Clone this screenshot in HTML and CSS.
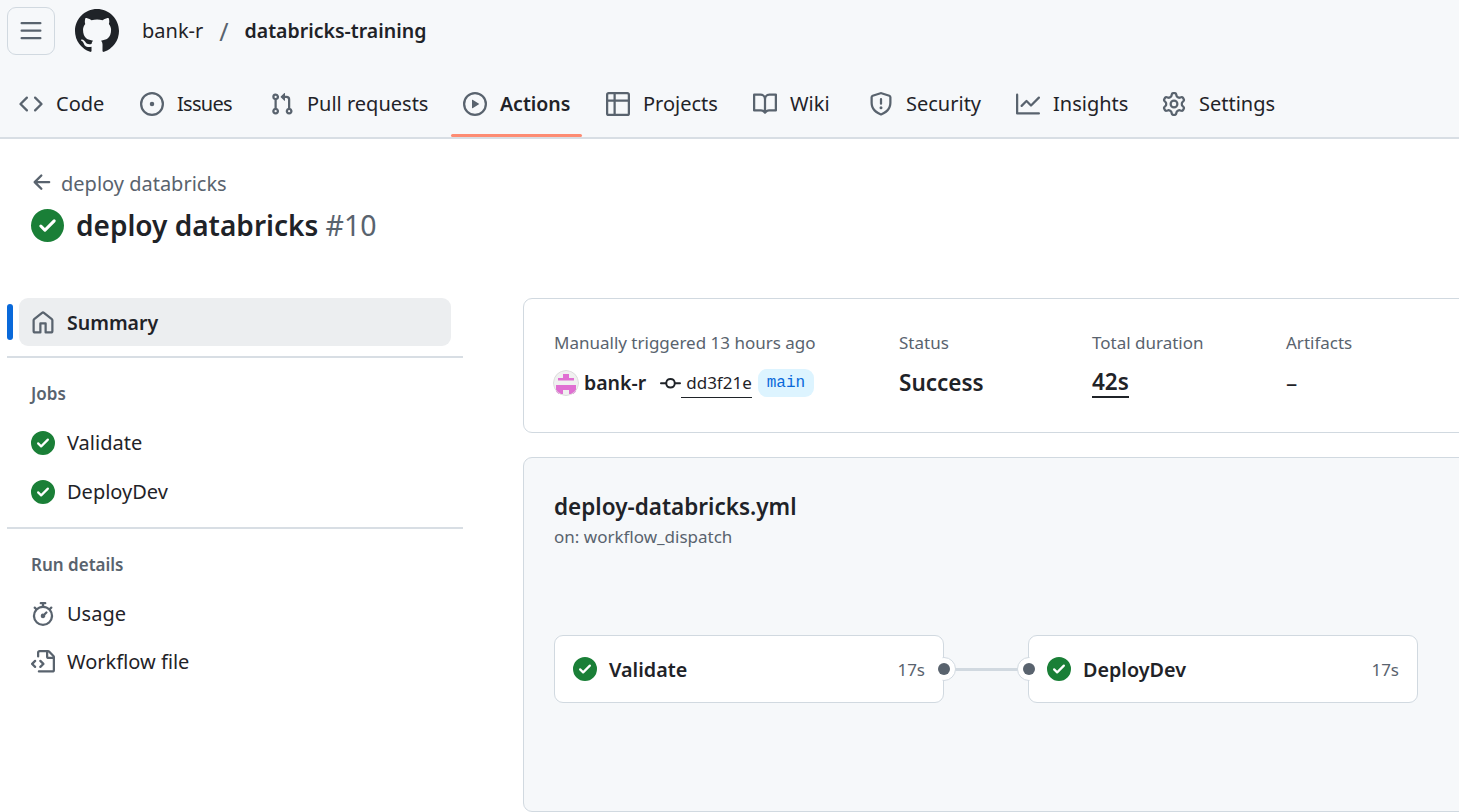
FILE: index.html
```html
<!DOCTYPE html>
<html lang="en">
<head>
<meta charset="utf-8">
<title>deploy databricks #10</title>
<link rel="stylesheet" href="styles.css">
</head>
<body>
<header class="header">
  <div class="topbar">
    <button class="menu-btn" aria-label="Menu"><svg class="ic" viewBox="0 0 16 16"><path d="M1 2.75A.75.75 0 0 1 1.75 2h12.5a.75.75 0 0 1 0 1.5H1.75A.75.75 0 0 1 1 2.75Zm0 5A.75.75 0 0 1 1.75 7h12.5a.75.75 0 0 1 0 1.5H1.75A.75.75 0 0 1 1 7.75ZM1.75 12h12.5a.75.75 0 0 1 0 1.5H1.75a.75.75 0 0 1 0-1.5Z"/></svg></button>
    <svg class="logo" viewBox="0 0 16 16"><path d="M8 0c4.42 0 8 3.58 8 8a8.013 8.013 0 0 1-5.45 7.59c-.4.08-.55-.17-.55-.38 0-.27.01-1.13.01-2.2 0-.75-.25-1.23-.54-1.48 1.78-.2 3.65-.88 3.65-3.95 0-.88-.31-1.59-.82-2.15.08-.2.36-1.02-.08-2.12 0 0-.67-.22-2.2.82-.64-.18-1.32-.27-2-.27-.68 0-1.36.09-2 .27-1.53-1.03-2.2-.82-2.2-.82-.44 1.1-.16 1.92-.08 2.12-.51.56-.82 1.28-.82 2.15 0 3.06 1.86 3.75 3.64 3.95-.23.2-.44.55-.51 1.07-.46.21-1.61.55-2.33-.66-.15-.24-.6-.83-1.23-.82-.67.01-.27.38.01.53.34.19.73.9.82 1.13.16.45.68 1.31 2.69.94 0 .67.01 1.3.01 1.49 0 .21-.15.45-.55.38A7.995 7.995 0 0 1 0 8c0-4.42 3.58-8 8-8Z"/></svg>
    <nav class="crumbs"><span>bank-r</span><span class="slash">/</span><strong class="repo">databricks-training</strong></nav>
  </div>
  <nav class="tabs">
    <a class="tab"><svg class="ic" viewBox="0 0 16 16"><path d="m11.28 3.22 4.25 4.25a.75.75 0 0 1 0 1.06l-4.25 4.25a.749.749 0 0 1-1.275-.326.749.749 0 0 1 .215-.734L13.94 8l-3.72-3.72a.749.749 0 0 1 .326-1.275.749.749 0 0 1 .734.215Zm-6.56 0a.751.751 0 0 1 1.042.018.751.751 0 0 1 .018 1.042L2.06 8l3.72 3.72a.749.749 0 0 1-.326 1.275.749.749 0 0 1-.734-.215L.47 8.53a.75.75 0 0 1 0-1.06Z"/></svg>Code</a>
    <a class="tab tab-tight"><svg class="ic" viewBox="0 0 16 16"><path d="M8 9.5a1.5 1.5 0 1 0 0-3 1.5 1.5 0 0 0 0 3Z"/><path d="M8 0a8 8 0 1 1 0 16A8 8 0 0 1 8 0ZM1.5 8a6.5 6.5 0 1 0 13 0 6.5 6.5 0 0 0-13 0Z"/></svg>Issues</a>
    <a class="tab"><svg class="ic" viewBox="0 0 16 16"><path d="M1.5 3.25a2.25 2.25 0 1 1 3 2.122v5.256a2.251 2.251 0 1 1-1.5 0V5.372A2.25 2.25 0 0 1 1.5 3.25Zm5.677-.177L9.573.677A.25.25 0 0 1 10 .854V2.5h1A2.5 2.5 0 0 1 13.5 5v5.628a2.251 2.251 0 1 1-1.5 0V5a1 1 0 0 0-1-1h-1v1.646a.25.25 0 0 1-.427.177L7.177 3.427a.25.25 0 0 1 0-.354ZM3.75 2.5a.75.75 0 1 0 0 1.5.75.75 0 0 0 0-1.5Zm0 9.5a.75.75 0 1 0 0 1.5.75.75 0 0 0 0-1.5Zm8.25.75a.75.75 0 1 0 1.5 0 .75.75 0 0 0-1.5 0Z"/></svg>Pull requests</a>
    <a class="tab tab-active"><svg class="ic" viewBox="0 0 16 16"><path d="M8 0a8 8 0 1 1 0 16A8 8 0 0 1 8 0ZM1.5 8a6.5 6.5 0 1 0 13 0 6.5 6.5 0 0 0-13 0Zm4.879-2.773 4.264 2.559a.25.25 0 0 1 0 .428l-4.264 2.559A.25.25 0 0 1 6 10.559V5.442a.25.25 0 0 1 .379-.215Z"/></svg>Actions</a>
    <a class="tab"><svg class="ic" viewBox="0 0 16 16"><path d="M0 1.75C0 .784.784 0 1.75 0h12.5C15.216 0 16 .784 16 1.75v12.5A1.75 1.75 0 0 1 14.25 16H1.75A1.75 1.75 0 0 1 0 14.25ZM6.5 6.5v8h7.75a.25.25 0 0 0 .25-.25V6.5Zm8-1.5V1.75a.25.25 0 0 0-.25-.25H6.5V5Zm-13 1.5v7.75c0 .138.112.25.25.25H5v-8ZM5 5V1.5H1.75a.25.25 0 0 0-.25.25V5Z"/></svg>Projects</a>
    <a class="tab"><svg class="ic" viewBox="0 0 16 16"><path d="M0 1.75A.75.75 0 0 1 .75 1h4.253c1.227 0 2.317.59 3 1.501A3.743 3.743 0 0 1 11.006 1h4.245a.75.75 0 0 1 .75.75v10.5a.75.75 0 0 1-.75.75h-4.507a2.25 2.25 0 0 0-1.591.659l-.622.621a.75.75 0 0 1-1.06 0l-.622-.621A2.25 2.25 0 0 0 5.258 13H.75a.75.75 0 0 1-.75-.75Zm7.251 10.324.004-5.073-.002-2.253A2.25 2.25 0 0 0 5.003 2.5H1.5v9h3.757a3.75 3.75 0 0 1 1.994.574ZM8.755 4.75l-.004 7.322a3.752 3.752 0 0 1 1.992-.572H14.5v-9h-3.495a2.25 2.25 0 0 0-2.25 2.25Z"/></svg>Wiki</a>
    <a class="tab"><svg class="ic" viewBox="0 0 16 16"><path d="M7.467.133a1.748 1.748 0 0 1 1.066 0l5.25 1.68A1.75 1.75 0 0 1 15 3.48V7c0 1.566-.32 3.182-1.303 4.682-.983 1.498-2.585 2.813-5.032 3.855a1.697 1.697 0 0 1-1.33 0c-2.447-1.042-4.049-2.357-5.032-3.855C1.32 10.182 1 8.566 1 7V3.48a1.75 1.75 0 0 1 1.217-1.667Zm.61 1.429a.25.25 0 0 0-.153 0l-5.25 1.68a.25.25 0 0 0-.174.238V7c0 1.358.275 2.666 1.057 3.86.784 1.194 2.121 2.34 4.366 3.297a.196.196 0 0 0 .154 0c2.245-.956 3.582-2.104 4.366-3.298C13.225 9.666 13.5 8.36 13.5 7V3.48a.251.251 0 0 0-.174-.237l-5.25-1.68ZM8.75 4.75v3a.75.75 0 0 1-1.5 0v-3a.75.75 0 0 1 1.5 0ZM9 10.5a1 1 0 1 1-2 0 1 1 0 0 1 2 0Z"/></svg>Security</a>
    <a class="tab"><svg class="ic" viewBox="0 0 16 16"><path d="M1.5 1.75V13.5h13.75a.75.75 0 0 1 0 1.5H.75a.75.75 0 0 1-.75-.75V1.75a.75.75 0 0 1 1.5 0Zm14.28 2.53-5.25 5.25a.75.75 0 0 1-1.06 0L7 7.06 4.28 9.78a.751.751 0 0 1-1.042-.018.751.751 0 0 1-.018-1.042l3.25-3.25a.75.75 0 0 1 1.06 0L10 7.94l4.72-4.72a.751.751 0 0 1 1.042.018.751.751 0 0 1 .018 1.042Z"/></svg>Insights</a>
    <a class="tab"><svg class="ic" viewBox="0 0 16 16"><path d="M8 0a8.2 8.2 0 0 1 .701.031C9.444.095 9.99.645 10.16 1.29l.288 1.107c.018.066.079.158.212.224.231.114.454.243.668.386.123.082.233.09.299.071l1.103-.303c.644-.176 1.392.021 1.82.63.27.385.506.792.704 1.218.315.675.111 1.422-.364 1.891l-.814.806c-.049.048-.098.147-.088.294.016.257.016.515 0 .772-.01.147.038.246.088.294l.814.806c.475.469.679 1.216.364 1.891a7.977 7.977 0 0 1-.704 1.217c-.428.61-1.176.807-1.82.63l-1.102-.302c-.067-.019-.177-.011-.3.071a5.909 5.909 0 0 1-.668.386c-.133.066-.194.158-.211.224l-.29 1.106c-.168.646-.715 1.196-1.458 1.26a8.006 8.006 0 0 1-1.402 0c-.743-.064-1.289-.614-1.458-1.26l-.289-1.106c-.018-.066-.079-.158-.212-.224a5.738 5.738 0 0 1-.668-.386c-.123-.082-.233-.09-.299-.071l-1.103.303c-.644.176-1.392-.021-1.82-.63a8.12 8.12 0 0 1-.704-1.218c-.315-.675-.111-1.422.363-1.891l.815-.806c.05-.048.098-.147.088-.294a6.214 6.214 0 0 1 0-.772c.01-.147-.038-.246-.088-.294l-.815-.806C.635 6.045.431 5.298.746 4.623a7.92 7.92 0 0 1 .704-1.217c.428-.61 1.176-.807 1.82-.63l1.102.302c.067.019.177.011.3-.071.214-.143.437-.272.668-.386.133-.066.194-.158.211-.224l.29-1.106C6.009.645 6.556.095 7.299.03 7.53.01 7.764 0 8 0Zm-.571 1.525c-.036.003-.108.036-.137.146l-.289 1.105c-.147.561-.549.967-.998 1.189-.173.086-.34.183-.5.29-.417.278-.97.423-1.529.27l-1.103-.303c-.109-.03-.175.016-.195.045-.22.312-.412.644-.573.99-.014.031-.021.11.059.19l.815.806c.411.406.562.957.53 1.456a4.709 4.709 0 0 0 0 .582c.032.499-.119 1.05-.53 1.456l-.815.806c-.081.08-.073.159-.059.19.162.346.353.677.573.989.02.03.085.076.195.046l1.102-.303c.56-.153 1.113-.008 1.53.27.161.107.328.204.501.29.447.222.85.629.997 1.189l.289 1.105c.029.109.101.143.137.146a6.6 6.6 0 0 0 1.142 0c.036-.003.108-.036.137-.146l.289-1.105c.147-.561.549-.967.998-1.189.173-.086.34-.183.5-.29.417-.278.97-.423 1.529-.27l1.103.303c.109.029.175-.016.195-.045.22-.313.411-.644.573-.99.014-.031.021-.11-.059-.19l-.815-.806c-.411-.406-.562-.957-.53-1.456a4.709 4.709 0 0 0 0-.582c-.032-.499.119-1.05.53-1.456l.815-.806c.081-.08.073-.159.059-.19a6.464 6.464 0 0 0-.573-.989c-.02-.03-.085-.076-.195-.046l-1.102.303c-.56.153-1.113.008-1.53-.27a4.44 4.44 0 0 0-.501-.29c-.447-.222-.85-.629-.997-1.189l-.289-1.105c-.029-.11-.101-.143-.137-.146a6.6 6.6 0 0 0-1.142 0ZM11 8a3 3 0 1 1-6 0 3 3 0 0 1 6 0ZM9.5 8a1.5 1.5 0 1 0-3.001.001A1.5 1.5 0 0 0 9.5 8Z"/></svg>Settings</a>
  </nav>
</header>

<section class="run-head">
  <a class="back"><svg class="ic ic-back" viewBox="0 0 16 16"><path d="M7.78 12.53a.75.75 0 0 1-1.06 0L2.47 8.28a.75.75 0 0 1 0-1.06l4.25-4.25a.751.751 0 0 1 1.042.018.751.751 0 0 1 .018 1.042L4.81 7h7.44a.75.75 0 0 1 0 1.5H4.81l2.97 2.97a.75.75 0 0 1 0 1.06Z"/></svg>deploy databricks</a>
  <h1 class="title"><svg class="ic-check ic-check-lg" viewBox="0 0 16 16"><path d="M8 16A8 8 0 1 1 8 0a8 8 0 0 1 0 16Zm3.78-9.72a.751.751 0 0 0-.018-1.042.751.751 0 0 0-1.042-.018L6.75 9.19 5.28 7.72a.751.751 0 0 0-1.042.018.751.751 0 0 0-.018 1.042l2 2a.75.75 0 0 0 1.06 0Z"/></svg><span>deploy databricks <span class="num">#10</span></span></h1>
</section>

<div class="layout">
  <aside class="sidebar">
    <a class="side-item side-selected"><svg class="ic" viewBox="0 0 16 16"><path d="M6.906.664a1.749 1.749 0 0 1 2.187 0l5.25 4.2c.415.332.657.835.657 1.367v7.019A1.75 1.75 0 0 1 13.25 15h-3.5a.75.75 0 0 1-.75-.75V9H7v5.25a.75.75 0 0 1-.75.75h-3.5A1.75 1.75 0 0 1 1 13.25V6.23c0-.531.242-1.034.657-1.366l5.25-4.2Zm1.25 1.171a.25.25 0 0 0-.312 0l-5.25 4.2a.25.25 0 0 0-.094.196v7.019c0 .138.112.25.25.25H5.5V8.25a.75.75 0 0 1 .75-.75h3.5a.75.75 0 0 1 .75.75v5.25h2.75a.25.25 0 0 0 .25-.25V6.23a.25.25 0 0 0-.094-.195Z"/></svg>Summary</a>
    <div class="side-rule"></div>
    <div class="side-label">Jobs</div>
    <a class="side-item side-job"><svg class="ic-check" viewBox="0 0 16 16"><path d="M8 16A8 8 0 1 1 8 0a8 8 0 0 1 0 16Zm3.78-9.72a.751.751 0 0 0-.018-1.042.751.751 0 0 0-1.042-.018L6.75 9.19 5.28 7.72a.751.751 0 0 0-1.042.018.751.751 0 0 0-.018 1.042l2 2a.75.75 0 0 0 1.06 0Z"/></svg>Validate</a>
    <a class="side-item side-job"><svg class="ic-check" viewBox="0 0 16 16"><path d="M8 16A8 8 0 1 1 8 0a8 8 0 0 1 0 16Zm3.78-9.72a.751.751 0 0 0-.018-1.042.751.751 0 0 0-1.042-.018L6.75 9.19 5.28 7.72a.751.751 0 0 0-1.042.018.751.751 0 0 0-.018 1.042l2 2a.75.75 0 0 0 1.06 0Z"/></svg>DeployDev</a>
    <div class="side-rule"></div>
    <div class="side-label">Run details</div>
    <a class="side-item"><svg class="ic" viewBox="0 0 16 16"><path d="M5.75.75A.75.75 0 0 1 6.5 0h3a.75.75 0 0 1 0 1.5h-.75v1l-.001.041a6.724 6.724 0 0 1 3.464 1.435l.007-.006.75-.75a.75.75 0 1 1 1.06 1.06l-.75.75-.006.007a6.75 6.75 0 1 1-10.548 0L2.72 5.03l-.75-.75a.751.751 0 0 1 .018-1.042.751.751 0 0 1 1.042-.018l.75.75.007.006A6.72 6.72 0 0 1 7.25 2.541V1.5H6.5a.75.75 0 0 1-.75-.75ZM8 14.5a5.25 5.25 0 1 0-.001-10.501A5.25 5.25 0 0 0 8 14.5Zm.389-6.7 1.33-1.33a.75.75 0 1 1 1.061 1.06L9.45 8.861A1.503 1.503 0 0 1 8 10.75a1.499 1.499 0 1 1 .389-2.95Z"/></svg>Usage</a>
    <a class="side-item"><svg class="ic" viewBox="0 0 16 16"><path d="M4 1.75C4 .784 4.784 0 5.75 0h5.586c.464 0 .909.184 1.237.513l2.914 2.914c.329.328.513.773.513 1.237v8.586A1.75 1.75 0 0 1 14.25 15h-9a.75.75 0 0 1 0-1.5h9a.25.25 0 0 0 .25-.25V6h-2.75A1.75 1.75 0 0 1 10 4.25V1.5H5.75a.25.25 0 0 0-.25.25v2.5a.75.75 0 0 1-1.5 0Zm1.72 4.97a.75.75 0 0 1 1.06 0l2 2a.75.75 0 0 1 0 1.06l-2 2a.749.749 0 0 1-1.275-.326.749.749 0 0 1 .215-.734l1.47-1.47-1.47-1.47a.75.75 0 0 1 0-1.06ZM3.28 7.78 1.81 9.25l1.47 1.47a.751.751 0 0 1-.018 1.042.751.751 0 0 1-1.042.018l-2-2a.75.75 0 0 1 0-1.06l2-2a.751.751 0 0 1 1.042.018.751.751 0 0 1 .018 1.042Zm8.22-6.218V4.25c0 .138.112.25.25.25h2.688l-.011-.013-2.914-2.914-.013-.011Z"/></svg>Workflow file</a>
  </aside>

  <main class="content">
    <section class="card summary">
      <div class="col col-trigger">
        <div class="col-label">Manually triggered 13 hours ago</div>
        <div class="col-value trigger">
          <svg class="avatar" viewBox="0 0 26 26"><circle cx="13" cy="13" r="13" fill="#f0f0f0"/><g fill="#e06fd2"><rect x="10" y="4" width="6" height="4"/><rect x="5" y="8" width="16" height="2.5"/><rect x="3" y="15" width="20" height="5"/><rect x="3" y="20" width="7" height="4"/><rect x="16" y="20" width="7" height="4"/></g><circle cx="13" cy="13" r="12.5" fill="none" stroke="#dcdcdc"/></svg>
          <strong class="actor">bank-r</strong>
          <svg class="ic ic-commit" viewBox="0 0 16 16"><path d="M11.93 8.5a4.002 4.002 0 0 1-7.86 0H.75a.75.75 0 0 1 0-1.5h3.32a4.002 4.002 0 0 1 7.86 0h3.32a.75.75 0 0 1 0 1.5Zm-1.43-.75a2.5 2.5 0 1 0-5 0 2.5 2.5 0 0 0 5 0Z"/></svg>
          <a class="sha">dd3f21e</a>
          <span class="branch">main</span>
        </div>
      </div>
      <div class="col col-status">
        <div class="col-label">Status</div>
        <div class="col-value"><strong>Success</strong></div>
      </div>
      <div class="col col-duration">
        <div class="col-label">Total duration</div>
        <div class="col-value"><a class="duration">42s</a></div>
      </div>
      <div class="col">
        <div class="col-label">Artifacts</div>
        <div class="col-value">–</div>
      </div>
    </section>

    <section class="card graph">
      <h2 class="wf-name">deploy-databricks.yml</h2>
      <div class="wf-on">on: workflow_dispatch</div>
      <div class="pipeline">
        <div class="job">
          <svg class="ic-check" viewBox="0 0 16 16"><path d="M8 16A8 8 0 1 1 8 0a8 8 0 0 1 0 16Zm3.78-9.72a.751.751 0 0 0-.018-1.042.751.751 0 0 0-1.042-.018L6.75 9.19 5.28 7.72a.751.751 0 0 0-1.042.018.751.751 0 0 0-.018 1.042l2 2a.75.75 0 0 0 1.06 0Z"/></svg>
          <strong class="job-name">Validate</strong>
          <span class="job-time">17s</span>
          <span class="port port-out"></span>
        </div>
        <div class="link"></div>
        <div class="job">
          <span class="port port-in"></span>
          <svg class="ic-check" viewBox="0 0 16 16"><path d="M8 16A8 8 0 1 1 8 0a8 8 0 0 1 0 16Zm3.78-9.72a.751.751 0 0 0-.018-1.042.751.751 0 0 0-1.042-.018L6.75 9.19 5.28 7.72a.751.751 0 0 0-1.042.018.751.751 0 0 0-.018 1.042l2 2a.75.75 0 0 0 1.06 0Z"/></svg>
          <strong class="job-name">DeployDev</strong>
          <span class="job-time">17s</span>
        </div>
      </div>
    </section>
  </main>
</div>
</body>
</html>
```
FILE: styles.css
```css
* { box-sizing: border-box; }
html, body { margin: 0; height: 812px; overflow: hidden; }
body {
  background: #fff;
  color: #1f2328;
  font-family: "Noto Sans", "Open Sans", sans-serif;
  font-size: 20px;
  line-height: 30px;
}
strong, h1, h2 { font-weight: 600; }

.ic { width: 24px; height: 24px; fill: #59636e; flex: none; display: block; }
.ic-check { width: 24px; height: 24px; fill: #1a7f37; flex: none; display: block; }
.ic-check-lg { width: 33px; height: 33px; }

.header { height: 139px; background: #f6f8fa; border-bottom: 2px solid #d8dee4; }
.topbar { display: flex; align-items: center; height: 62px; padding: 0 0 0 7px; }
.menu-btn {
  width: 48px; height: 48px; padding: 0; display: flex; align-items: center; justify-content: center;
  background: #f6f8fa; border: 1.5px solid #d1d9e0; border-radius: 9px;
}
.logo { width: 44px; height: 44px; margin-left: 20px; fill: #1f2328; flex: none; }
.crumbs { display: flex; align-items: center; margin-left: 23px; }
.slash { margin: 0 16px; color: #59636e; font-size: 25px; }
.repo { font-size: 19.5px; }

.tabs {
  display: grid; column-gap: 12px; padding: 0 7px; height: 75px;
  grid-template-columns: 109px 118px 181px 131px 135px 104px 135px 134px auto;
  justify-content: start;
}
.tab { display: flex; align-items: center; gap: 13px; padding: 9px 12px 0; height: 75px; position: relative; white-space: nowrap; }
.tab-tight { letter-spacing: -.7px; }
.tab-active { font-weight: 600; font-size: 19.5px; }
.tab-active::after {
  content: ""; position: absolute; left: 0; right: 0; bottom: 0; height: 3px;
  background: #fd8c73; border-radius: 2px;
}

.run-head { padding: 30px 0 0 31px; height: 159px; }
.back { display: flex; align-items: center; gap: 6px; color: #59636e; height: 30px; }
.ic-back { width: 25px; height: 25px; margin: -3px 0 0 -1px; }
.title { display: flex; align-items: center; gap: 12px; margin: 10px 0 0; font-size: 28px; line-height: 33px; }
.num { font-weight: 400; color: #59636e; font-size: 28.5px; }

.layout { display: flex; gap: 60px; padding-left: 7px; }
.sidebar { width: 456px; flex: none; display: flex; flex-direction: column; }
.side-item { display: flex; align-items: center; gap: 12px; height: 48px; padding-left: 24px; }
.side-job { margin-bottom: 1px; }
.side-selected {
  margin-left: 12px; margin-right: 12px; padding-left: 12px; padding-top: 1px; background: #eceef0; border-radius: 9px;
  font-weight: 600; font-size: 19.5px; position: relative;
}
.side-selected::before {
  content: ""; position: absolute; left: -12px; top: 6px; bottom: 6px; width: 6px;
  background: #0969da; border-radius: 3px;
}
.side-rule { height: 2px; background: #d8dee4; margin-top: 10px; }
.side-label { font-size: 17px; font-weight: 600; color: #59636e; padding-left: 24px; line-height: 24px; margin: 24px 0 13px; }

.content { flex: 1; min-width: 0; display: flex; flex-direction: column; gap: 24px; }
.card { border: 1.5px solid #d1d9e0; border-radius: 9px; margin-right: -30px; }
.summary { height: 135px; display: flex; padding: 30px 0 0 30px; background: #fff; }
.col { flex: none; width: 195px; }
.col-trigger { width: 345px; }
.col-status { width: 192px; }
.col-duration { padding-left: 1px; }
.col-label { font-size: 17px; line-height: 28px; color: #59636e; }
.col-value { display: flex; align-items: center; height: 28px; margin-top: 12px; font-size: 22.5px; }
.trigger { font-size: 19.5px; }
.avatar { width: 26px; height: 26px; flex: none; margin-left: -1px; border-radius: 50%; }
.actor { margin-left: 5px; }
.ic-commit { width: 21px; height: 21px; margin-left: 14px; fill: #1f2328; }
.sha { border-bottom: 1.5px solid #1f2328; padding-left: 5px; font-size: 17px; line-height: 26px; height: 28px; margin-top: 1px; }
.branch {
  margin-left: 6px; padding: 0 9px; height: 28px; line-height: 28px; border-radius: 9px; background: #ddf4ff; color: #0969da;
  font-family: "Liberation Mono", monospace; font-size: 16px; margin-top: -1px;
}
.duration { font-weight: 600; border-bottom: 2px solid #1f2328; line-height: 27px; height: 30px; }

.graph { height: 355px; background: #f6f8fa; padding: 33px 0 0 30px; }
.wf-name { margin: 0; font-size: 22.5px; line-height: 32px; }
.wf-on { font-size: 17px; line-height: 24px; color: #59636e; margin-top: 2px; }
.pipeline { display: flex; align-items: center; margin-top: 86px; }
.job {
  width: 390px; height: 68px; flex: none; display: flex; align-items: center; gap: 12px; padding: 0 18px;
  background: #fff; border: 1.5px solid #d1d9e0; border-radius: 9px; position: relative;
}
.job-name { flex: 1; font-size: 19.75px; padding-top: 1px; }
.job-time { font-size: 17px; color: #59636e; padding-top: 1px; }
.link { width: 84px; height: 3px; background: #d1d9e0; flex: none; }
.port { position: absolute; top: 50%; width: 24px; height: 24px; margin-top: -12px; }
.port::before {
  content: ""; position: absolute; inset: 0; border-radius: 50%;
  background: #fff; border: 1.5px solid #d1d9e0;
}
.port::after {
  content: ""; position: absolute; left: 6px; top: 6px; width: 12px; height: 12px; border-radius: 50%; background: #59636e;
}
.port-out { right: -12.5px; }
.port-out::before { clip-path: inset(-2px -2px -2px 11px); }
.port-in { left: -12.5px; }
.port-in::before { clip-path: inset(-2px 11px -2px -2px); }
```
